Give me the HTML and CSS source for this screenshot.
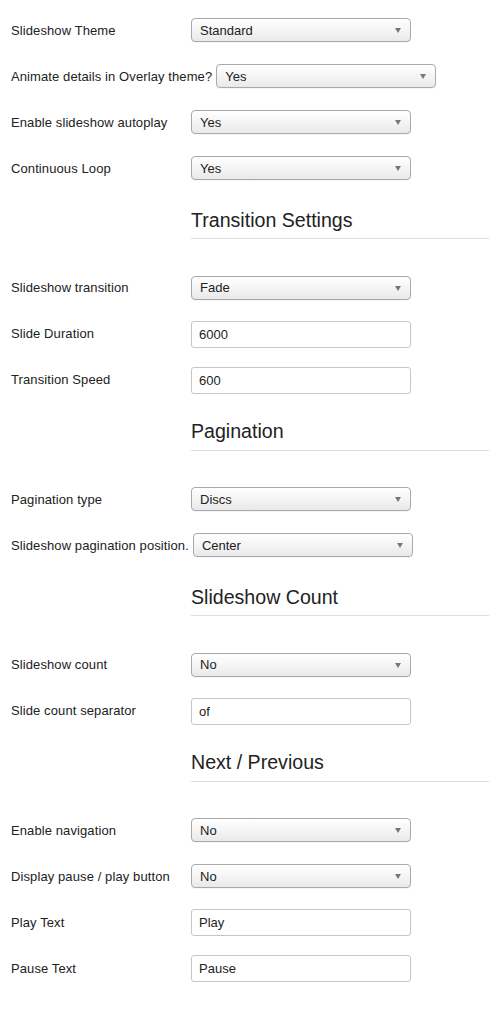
FILE: index.html
```html
<!DOCTYPE html>
<html>
<head>
<meta charset="utf-8">
<link rel="stylesheet" href="styles.css">
</head>
<body>
<div class="form">
  <div class="row"><label class="lbl">Slideshow Theme</label><div class="select"><span>Standard</span><i class="arrow"></i></div></div>
  <div class="row"><label class="lbl">Animate details in Overlay theme?</label><div class="select"><span>Yes</span><i class="arrow"></i></div></div>
  <div class="row"><label class="lbl">Enable slideshow autoplay</label><div class="select"><span>Yes</span><i class="arrow"></i></div></div>
  <div class="row"><label class="lbl">Continuous Loop</label><div class="select"><span>Yes</span><i class="arrow"></i></div></div>

  <h3 class="section">Transition Settings</h3>
  <div class="row"><label class="lbl">Slideshow transition</label><div class="select"><span>Fade</span><i class="arrow"></i></div></div>
  <div class="row"><label class="lbl">Slide Duration</label><div class="input">6000</div></div>
  <div class="row"><label class="lbl">Transition Speed</label><div class="input">600</div></div>

  <h3 class="section">Pagination</h3>
  <div class="row"><label class="lbl">Pagination type</label><div class="select"><span>Discs</span><i class="arrow"></i></div></div>
  <div class="row"><label class="lbl">Slideshow pagination position.</label><div class="select"><span>Center</span><i class="arrow"></i></div></div>

  <h3 class="section">Slideshow Count</h3>
  <div class="row"><label class="lbl">Slideshow count</label><div class="select"><span>No</span><i class="arrow"></i></div></div>
  <div class="row"><label class="lbl">Slide count separator</label><div class="input">of</div></div>

  <h3 class="section">Next / Previous</h3>
  <div class="row"><label class="lbl">Enable navigation</label><div class="select"><span>No</span><i class="arrow"></i></div></div>
  <div class="row"><label class="lbl">Display pause / play button</label><div class="select"><span>No</span><i class="arrow"></i></div></div>
  <div class="row"><label class="lbl">Play Text</label><div class="input">Play</div></div>
  <div class="row"><label class="lbl">Pause Text</label><div class="input">Pause</div></div>
</div>
</body>
</html>
```

FILE: styles.css
```css
* { box-sizing: border-box; }
html, body { margin: 0; padding: 0; background: #fff; }
body {
  font-family: "Liberation Sans", Arial, Helvetica, sans-serif;
  font-size: 13px;
  color: #222;
}
.form { padding: 7px 0 0 11px; }
.row {
  display: flex;
  align-items: center;
  height: 46px;
}
.lbl {
  min-width: 176px;
  margin-right: 4px;
  white-space: nowrap;
  letter-spacing: 0.1px;
  color: #222;
}
.select {
  width: 220px;
  height: 24px;
  border: 1px solid #a9a9a9;
  border-radius: 4px;
  background: linear-gradient(#ffffff 0%, #f6f6f6 45%, #e9e9e9 100%);
  display: flex;
  align-items: center;
  justify-content: space-between;
  padding: 0 9px 0 8px;
  color: #222;
  box-shadow: 0 1px 0 rgba(0,0,0,0.04);
}
.arrow {
  width: 0;
  height: 0;
  border-left: 3.5px solid transparent;
  border-right: 3.5px solid transparent;
  border-top: 5px solid #777;
  margin-top: 1px;
}
.input {
  width: 220px;
  height: 27px;
  border: 1px solid #c6c6c6;
  border-radius: 3px;
  background: #fff;
  display: flex;
  align-items: center;
  padding: 0 7px;
  color: #222;
  margin-top: 1px;
}
.section {
  margin: 0 0 25.5px 180px;
  padding: 16.5px 0 6.5px 0;
  font-size: 19.6px;
  line-height: 24px;
  font-weight: normal;
  color: #222;
  border-bottom: 1px solid #dedede;
}
```
